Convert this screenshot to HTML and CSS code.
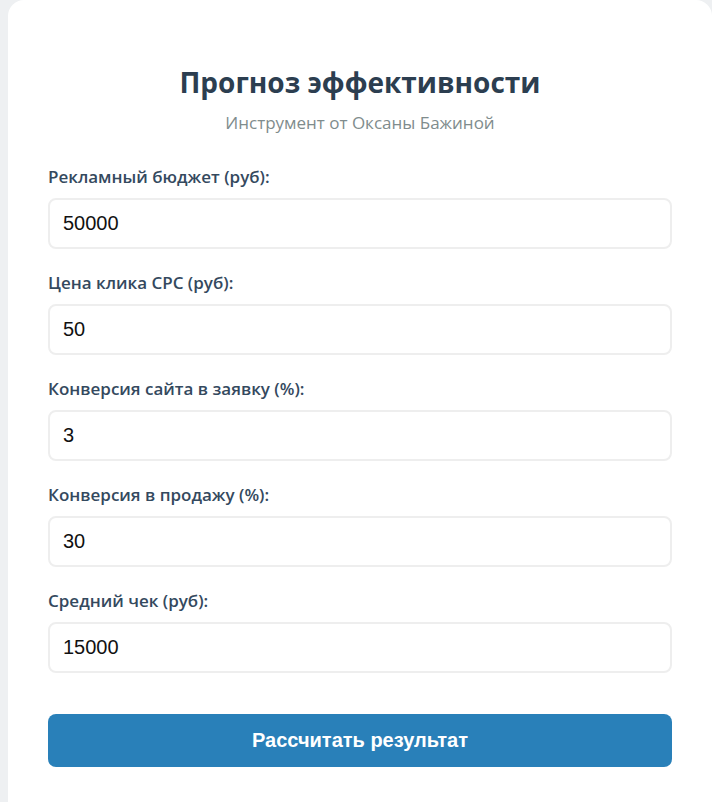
FILE: index.html
```html
<!DOCTYPE html>
<html lang="ru">

<head>
    <meta charset="UTF-8" />
    <meta name="viewport" content="width=device-width, initial-scale=1.0" />
    <title>Прогноз эффективности</title>
    <link rel="stylesheet" href="styles.css">
</head>

<body>
    <div class="calc-container">
        <div class="calc-header">
            <h1>Прогноз эффективности</h1>
            <p class="subtitle">Инструмент от Оксаны Бажиной</p>
        </div>

        <form id="calcForm">
            <div class="field">
                <label for="budget">Рекламный бюджет (руб):</label>
                <input type="number" id="budget" value="50000" />
            </div>

            <div class="field">
                <label for="cpc">Цена клика CPC (руб):</label>
                <input type="number" id="cpc" value="50" />
            </div>

            <div class="field">
                <label for="conv">Конверсия сайта в заявку (%):</label>
                <input type="number" id="conv" value="3" />
            </div>

            <div class="field">
                <label for="sale">Конверсия в продажу (%):</label>
                <input type="number" id="sale" value="30" />
            </div>

            <div class="field">
                <label for="check">Средний чек (руб):</label>
                <input type="number" id="check" value="15000" />
            </div>

            <button class="btn" type="button">Рассчитать результат</button>
        </form>
    </div>
</body>

</html>
```

FILE: styles.css
```css
body {
    background-color: #eef0f2;
    font-family: 'Open Sans', 'Noto Sans', sans-serif;
    margin: 0;
    padding: 0;
}

.calc-container {
    box-sizing: border-box;
    margin: 0 0 0 8px;
    padding: 24px 40px 20px;
    background-color: #ffffff;
    border-radius: 16px 16px 0 0;
    min-height: 802px;
}

.calc-header {
    text-align: center;
    padding-top: 41px;
    margin-bottom: 34px;
}

h1 {
    margin: 0 0 14px;
    font-size: 28px;
    line-height: 34px;
    font-weight: 700;
    color: #2c3e50;
}

.subtitle {
    margin: 0;
    font-size: 17px;
    line-height: 20px;
    color: #7f8c8d;
}

.field {
    margin-bottom: 24px;
}

label {
    display: block;
    margin-bottom: 11px;
    font-size: 17px;
    line-height: 20px;
    font-weight: 600;
    color: #34495e;
}

input[type="number"] {
    display: block;
    box-sizing: border-box;
    width: 100%;
    height: 51px;
    padding: 0 13px;
    border: 2px solid #eeeeee;
    border-radius: 8px;
    font-family: 'Liberation Sans', Arial, sans-serif;
    font-size: 20px;
    color: #111;
    background-color: #fff;
    -moz-appearance: textfield;
}

input[type="number"]::-webkit-inner-spin-button,
input[type="number"]::-webkit-outer-spin-button {
    -webkit-appearance: none;
    margin: 0;
}

.btn {
    display: block;
    width: 100%;
    height: 53px;
    margin-top: 41px;
    border: none;
    border-radius: 8px;
    background-color: #2980b9;
    color: #fff;
    font-family: 'Liberation Sans', Arial, sans-serif;
    font-size: 20px;
    font-weight: bold;
    cursor: pointer;
}
```
